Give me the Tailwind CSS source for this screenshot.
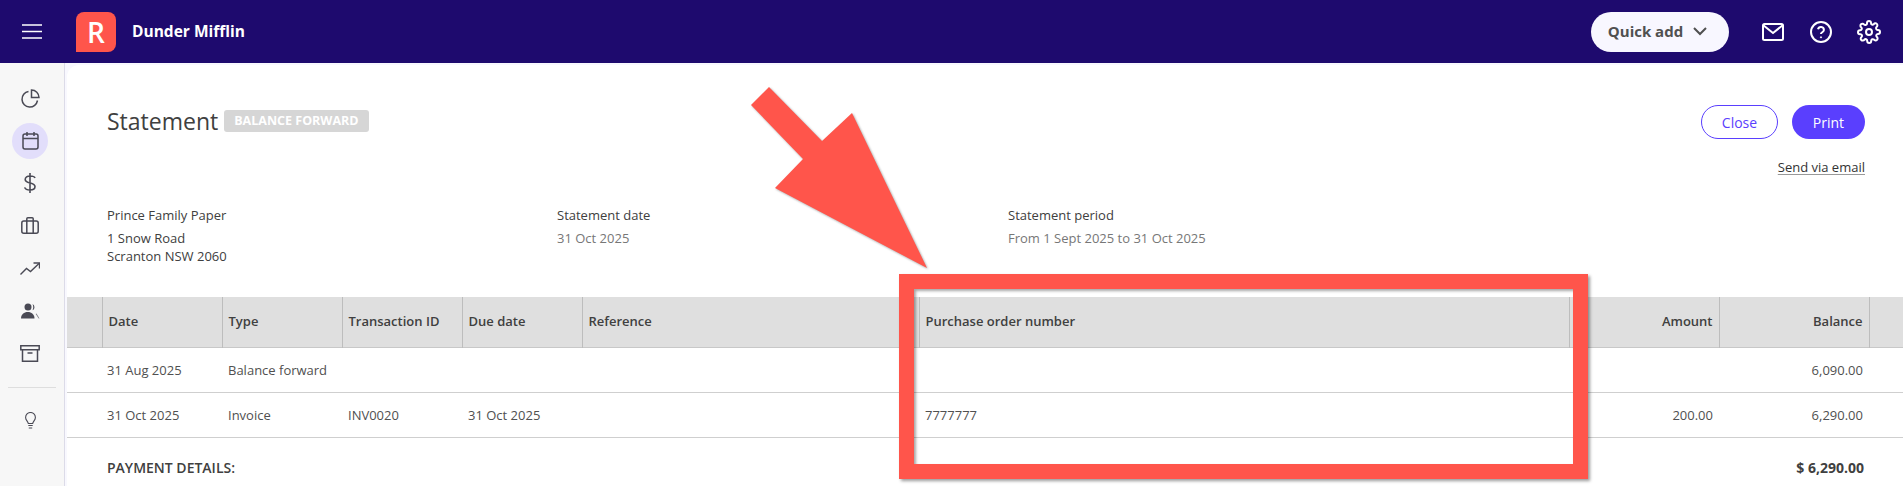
<!DOCTYPE html>
<html lang="en" class="h-[486px] overflow-hidden">
<head>
  <meta charset="UTF-8" />
  <title>Statement</title>
  <script src="https://cdn.jsdelivr.net/npm/@tailwindcss/browser@4"></script>
</head>
<body class="relative h-[486px] overflow-hidden bg-[#f8f8fe] font-['Open_Sans',sans-serif] text-[13px] text-[#404040]">

  <!-- Top bar -->
  <header class="h-[63px] bg-[#1e0a6e] flex items-center text-white">
    <button class="w-[76px] pl-[22px] flex">
      <svg width="20" height="15" viewBox="0 0 20 15" fill="none" stroke="white" stroke-width="1.6"><path d="M0 1h20M0 7.500h20M0 14h20"/></svg>
    </button>
    <div class="w-10 h-10 bg-[#ff554b] rounded-[8px] rounded-bl-none flex items-center justify-center text-[28px] font-semibold leading-none">R</div>
    <div class="ml-[16px] text-[15.500px] font-bold">Dunder Mifflin</div>
    <div class="ml-auto flex items-center">
      <button class="w-[138px] h-10 pr-[5px] rounded-full bg-[#f8f7ff] text-[#505050] text-[15px] font-bold flex items-center justify-center gap-[10px]">
        Quick add
        <svg width="14" height="9" viewBox="0 0 14 9" fill="none" stroke="#505050" stroke-width="2"><path d="M1 1l6 6 6-6"/></svg>
      </button>
      <svg class="ml-[32px]" width="24" height="20" viewBox="0 0 24 20" fill="none" stroke="white" stroke-width="2"><rect x="2" y="2" width="20" height="16" rx="1.500"/><path d="M2 3l10 8 10-8"/></svg>
      <svg class="ml-[24px]" width="24" height="24" viewBox="0 0 24 24" fill="none" stroke="white" stroke-width="2"><circle cx="12" cy="12" r="10"/><path d="M9 9.200a3 3 0 0 1 5.900.8c0 2-3 2.400-3 4"/><circle cx="12" cy="17.300" r=".6" fill="white" stroke-width="1"/></svg>
      <svg class="ml-[24px] mr-[22px]" width="24" height="24" viewBox="0 0 24 24" fill="none" stroke="white" stroke-width="2" stroke-linejoin="round"><circle cx="12" cy="12" r="3"/><path d="M19.400 15a1.600 1.600 0 0 0 .3 1.800l.1.1a2 2 0 1 1-2.800 2.800l-.1-.1a1.600 1.600 0 0 0-2.700 1.100v.3a2 2 0 0 1-4 0v-.2a1.600 1.600 0 0 0-2.800-1.100l-.1.1a2 2 0 1 1-2.800-2.800l.1-.1a1.600 1.600 0 0 0-1.100-2.700H3a2 2 0 0 1 0-4h.2a1.600 1.600 0 0 0 1.100-2.800l-.1-.1a2 2 0 1 1 2.800-2.800l.1.1a1.600 1.600 0 0 0 1.800.3H9a1.600 1.600 0 0 0 1-1.500V3a2 2 0 0 1 4 0v.1a1.600 1.600 0 0 0 2.700 1.100l.1-.1a2 2 0 1 1 2.800 2.800l-.1.1a1.600 1.600 0 0 0-.3 1.800V9a1.600 1.600 0 0 0 1.500 1h.3a2 2 0 0 1 0 4h-.1a1.600 1.600 0 0 0-1.500 1z"/></svg>
    </div>
  </header>

  <div class="flex h-[423px]">
    <!-- Sidebar -->
    <aside class="w-[65px] shrink-0 bg-[#f7f7f7] border-r border-[#dcdbe8] flex flex-col pt-[14px]">
      <div class="w-[60px] h-[42.500px] flex items-center justify-center">
        <svg width="19" height="19" viewBox="0 0 19 19" fill="none" stroke="#4a4a55" stroke-width="1.500"><path d="M7.500 2.500a7.800 7.800 0 1 0 9 9"/><path d="M10.500 1v7.500H18A7.500 7.500 0 0 0 10.500 1z"/></svg>
      </div>
      <div class="w-[60px] h-[42.500px] flex items-center justify-center">
        <div class="w-9 h-9 rounded-full bg-[#e2defb] flex items-center justify-center">
          <svg width="17" height="19" viewBox="0 0 17 19" fill="none" stroke="#4a4a55" stroke-width="1.500"><rect x="1" y="3" width="15" height="15" rx="2"/><path d="M1 7.500h15M5 1v4M12 1v4"/></svg>
        </div>
      </div>
      <div class="w-[60px] h-[42.500px] flex items-center justify-center">
        <svg width="12" height="20" viewBox="0 0 12 20" fill="none" stroke="#4a4a55" stroke-width="1.600"><path d="M6 0v20M11 5C10.500 3.500 8.500 3 6 3 3.300 3 1.200 4.300 1.200 6.500 1.200 11.200 11 8.800 11 13.500 11 15.700 8.700 17 6 17c-2.700 0-4.800-1-5.300-2.600"/></svg>
      </div>
      <div class="w-[60px] h-[42.500px] flex items-center justify-center">
        <svg width="18" height="17" viewBox="0 0 18 17" fill="none" stroke="#4a4a55" stroke-width="1.500"><rect x=".8" y="4" width="16.400" height="12.200" rx="2"/><path d="M5.800 4V1.800a1 1 0 0 1 1-1h4.400a1 1 0 0 1 1 1V4M5.800 4v12.200M12.200 4v12.200"/></svg>
      </div>
      <div class="w-[60px] h-[42.500px] flex items-center justify-center">
        <svg width="20" height="13" viewBox="0 0 20 13" fill="none" stroke="#4a4a55" stroke-width="1.400"><path d="M.5 12.500l6-6 4 3L19 1.500"/><path d="M13.500 1H19.500V6.500"/></svg>
      </div>
      <div class="w-[60px] h-[42.500px] flex items-center justify-center">
        <svg width="19" height="16" viewBox="0 0 19 16" fill="#4a4a55"><circle cx="7" cy="4" r="3.500"/><path d="M0 15.500c0-4 3-6.500 6.800-6.500s6.700 2.500 6.700 6.500z"/><path d="M11.500 1a3.500 3.500 0 0 1 0 6.300c1-1.800 1-4.500 0-6.300z"/><path d="M15.500 10.500l3 5h-.8l-3-4.400z" opacity=".7"/></svg>
      </div>
      <div class="w-[60px] h-[42.500px] flex items-center justify-center">
        <svg width="20" height="17" viewBox="0 0 20 17" fill="none" stroke="#4a4a55" stroke-width="1.500"><path d="M.8.800h18.400v4H.8zM2.500 4.800v11.400h15V4.800M7.500 8h5"/></svg>
      </div>
      <div class="w-12 ml-2 mt-[12px] border-t border-[#dedede]"></div>
      <div class="w-[60px] h-[42.500px] mt-[12px] flex items-center justify-center">
        <svg width="11" height="17" viewBox="0 0 11 17" fill="none" stroke="#4a4a55" stroke-width="1.100"><path d="M3.300 11.500C3 9.500.6 8.300.6 5.400a4.900 4.900 0 0 1 9.800 0c0 2.900-2.400 4.100-2.700 6.100z"/><path d="M3.300 13.500h4.400M3.800 16h3.400"/></svg>
      </div>
    </aside>

    <!-- Page -->
    <main class="relative flex-1 ml-[2px] mt-[2px] bg-white rounded-tl-[12px]">
      <div class="flex items-start pl-[40px] pr-[38px] pt-[40px]">
        <div class="flex items-center">
          <h1 class="text-[23px] leading-[32px] text-[#404040]">Statement</h1>
          <span class="ml-[6px] h-[22px] px-[10px] rounded-[3px] bg-[#d6d6d6] text-white text-[12.500px] font-bold flex items-center">BALANCE FORWARD</span>
        </div>
        <div class="ml-auto flex flex-col items-end">
          <div class="flex gap-[14px]">
            <button class="w-[77px] h-[34px] rounded-full border border-[#5a3ffe] text-[#5a3ffe] text-[14px]">Close</button>
            <button class="w-[73px] h-[34px] rounded-full bg-[#5a3ffe] text-white text-[14px]">Print</button>
          </div>
          <a class="mt-[19px] text-[13px] leading-[18px] text-[#333] underline underline-offset-2 decoration-[#999]">Send via email</a>
        </div>
      </div>

      <div class="grid grid-cols-[450px_451px_1fr] pl-[40px] mt-[28px] text-[13px] leading-[23px]">
        <div>
          <p class="mb-[2px]">Prince Family Paper</p>
          <p class="leading-[18px]">1 Snow Road<br>Scranton NSW 2060</p>
        </div>
        <div>
          <p class="mb-[2px]">Statement date</p>
          <p class="leading-[18px] text-[#777]">31 Oct 2025</p>
        </div>
        <div>
          <p class="mb-[2px]">Statement period</p>
          <p class="leading-[18px] text-[#777]">From 1 Sept 2025 to 31 Oct 2025</p>
        </div>
      </div>

      <table class="absolute top-[232px] left-0 w-full table-fixed border-collapse text-[13px]">
        <colgroup>
          <col class="w-[35px]"><col class="w-[120px]"><col class="w-[120px]"><col class="w-[120px]"><col class="w-[120px]"><col class="w-[337px]"><col class="w-[650px]"><col class="w-[150px]"><col class="w-[150px]"><col>
        </colgroup>
        <thead class="bg-[#dfdfdf] text-left">
          <tr class="h-[50px] border-b border-[#c8c8c8]">
            <th class="border-r border-[#bdbdbd]"></th>
            <th class="border-r border-[#bdbdbd] px-[6px] font-semibold">Date</th>
            <th class="border-r border-[#bdbdbd] px-[6px] font-semibold">Type</th>
            <th class="border-r border-[#bdbdbd] px-[6px] font-semibold">Transaction ID</th>
            <th class="border-r border-[#bdbdbd] px-[6px] font-semibold">Due date</th>
            <th class="border-r border-[#bdbdbd] px-[6px] font-semibold">Reference</th>
            <th class="border-r border-[#bdbdbd] px-[6px] font-semibold">Purchase order number</th>
            <th class="border-r border-[#bdbdbd] px-[6px] font-semibold text-right">Amount</th>
            <th class="border-r border-[#bdbdbd] px-[6px] font-semibold text-right">Balance</th>
            <th></th>
          </tr>
        </thead>
        <tbody class="text-[#505050]">
          <tr class="h-[45px] border-b border-[#cfcfcf]">
            <td></td><td class="px-[5px] pt-[2px]">31 Aug 2025</td><td colspan="2" class="pl-[6px] pt-[2px]">Balance forward</td><td></td><td></td><td></td><td></td><td class="px-[6px] pt-[2px] text-right">6,090.00</td><td></td>
          </tr>
          <tr class="h-[45px] border-b border-[#cfcfcf]">
            <td></td><td class="px-[5px] pt-[2px]">31 Oct 2025</td><td class="pl-[6px] pt-[2px]">Invoice</td><td class="pl-[6px] pt-[2px]">INV0020</td><td class="pl-[6px] pt-[2px]">31 Oct 2025</td><td></td><td class="px-[6px] pt-[2px]">7777777</td><td class="px-[6px] pt-[2px] text-right">200.00</td><td class="px-[6px] pt-[2px] text-right">6,290.00</td><td></td>
          </tr>
        </tbody>
      </table>

      <div class="absolute top-[393px] left-[40px] right-[39px] flex text-[14px] leading-[20px] text-[#404040]">
        <span class="font-semibold">PAYMENT DETAILS:</span>
        <span class="ml-auto mr-[212px] mt-[3px] font-semibold">Balance due:</span>
        <span class="font-bold">$ 6,290.00</span>
      </div>
    </main>
  </div>

  <!-- Annotation laid over the screenshot -->
  <svg class="absolute top-0 left-0 pointer-events-none drop-shadow-[1px_1px_1px_rgba(0,0,0,0.35)]" width="1903" height="486" viewBox="0 0 1903 486">
    <polygon points="769,87 751,105 803,159 775,188 927,268 852,113 822,141" fill="#ff554b"/>
  </svg>
  <div class="absolute left-[899px] top-[274px] w-[689px] h-[205px] border-[15px] border-[#ff554b] shadow-[2px_2px_3px_rgba(0,0,0,0.4),inset_2px_2px_3px_rgba(0,0,0,0.35)]"></div>
</body>
</html>
